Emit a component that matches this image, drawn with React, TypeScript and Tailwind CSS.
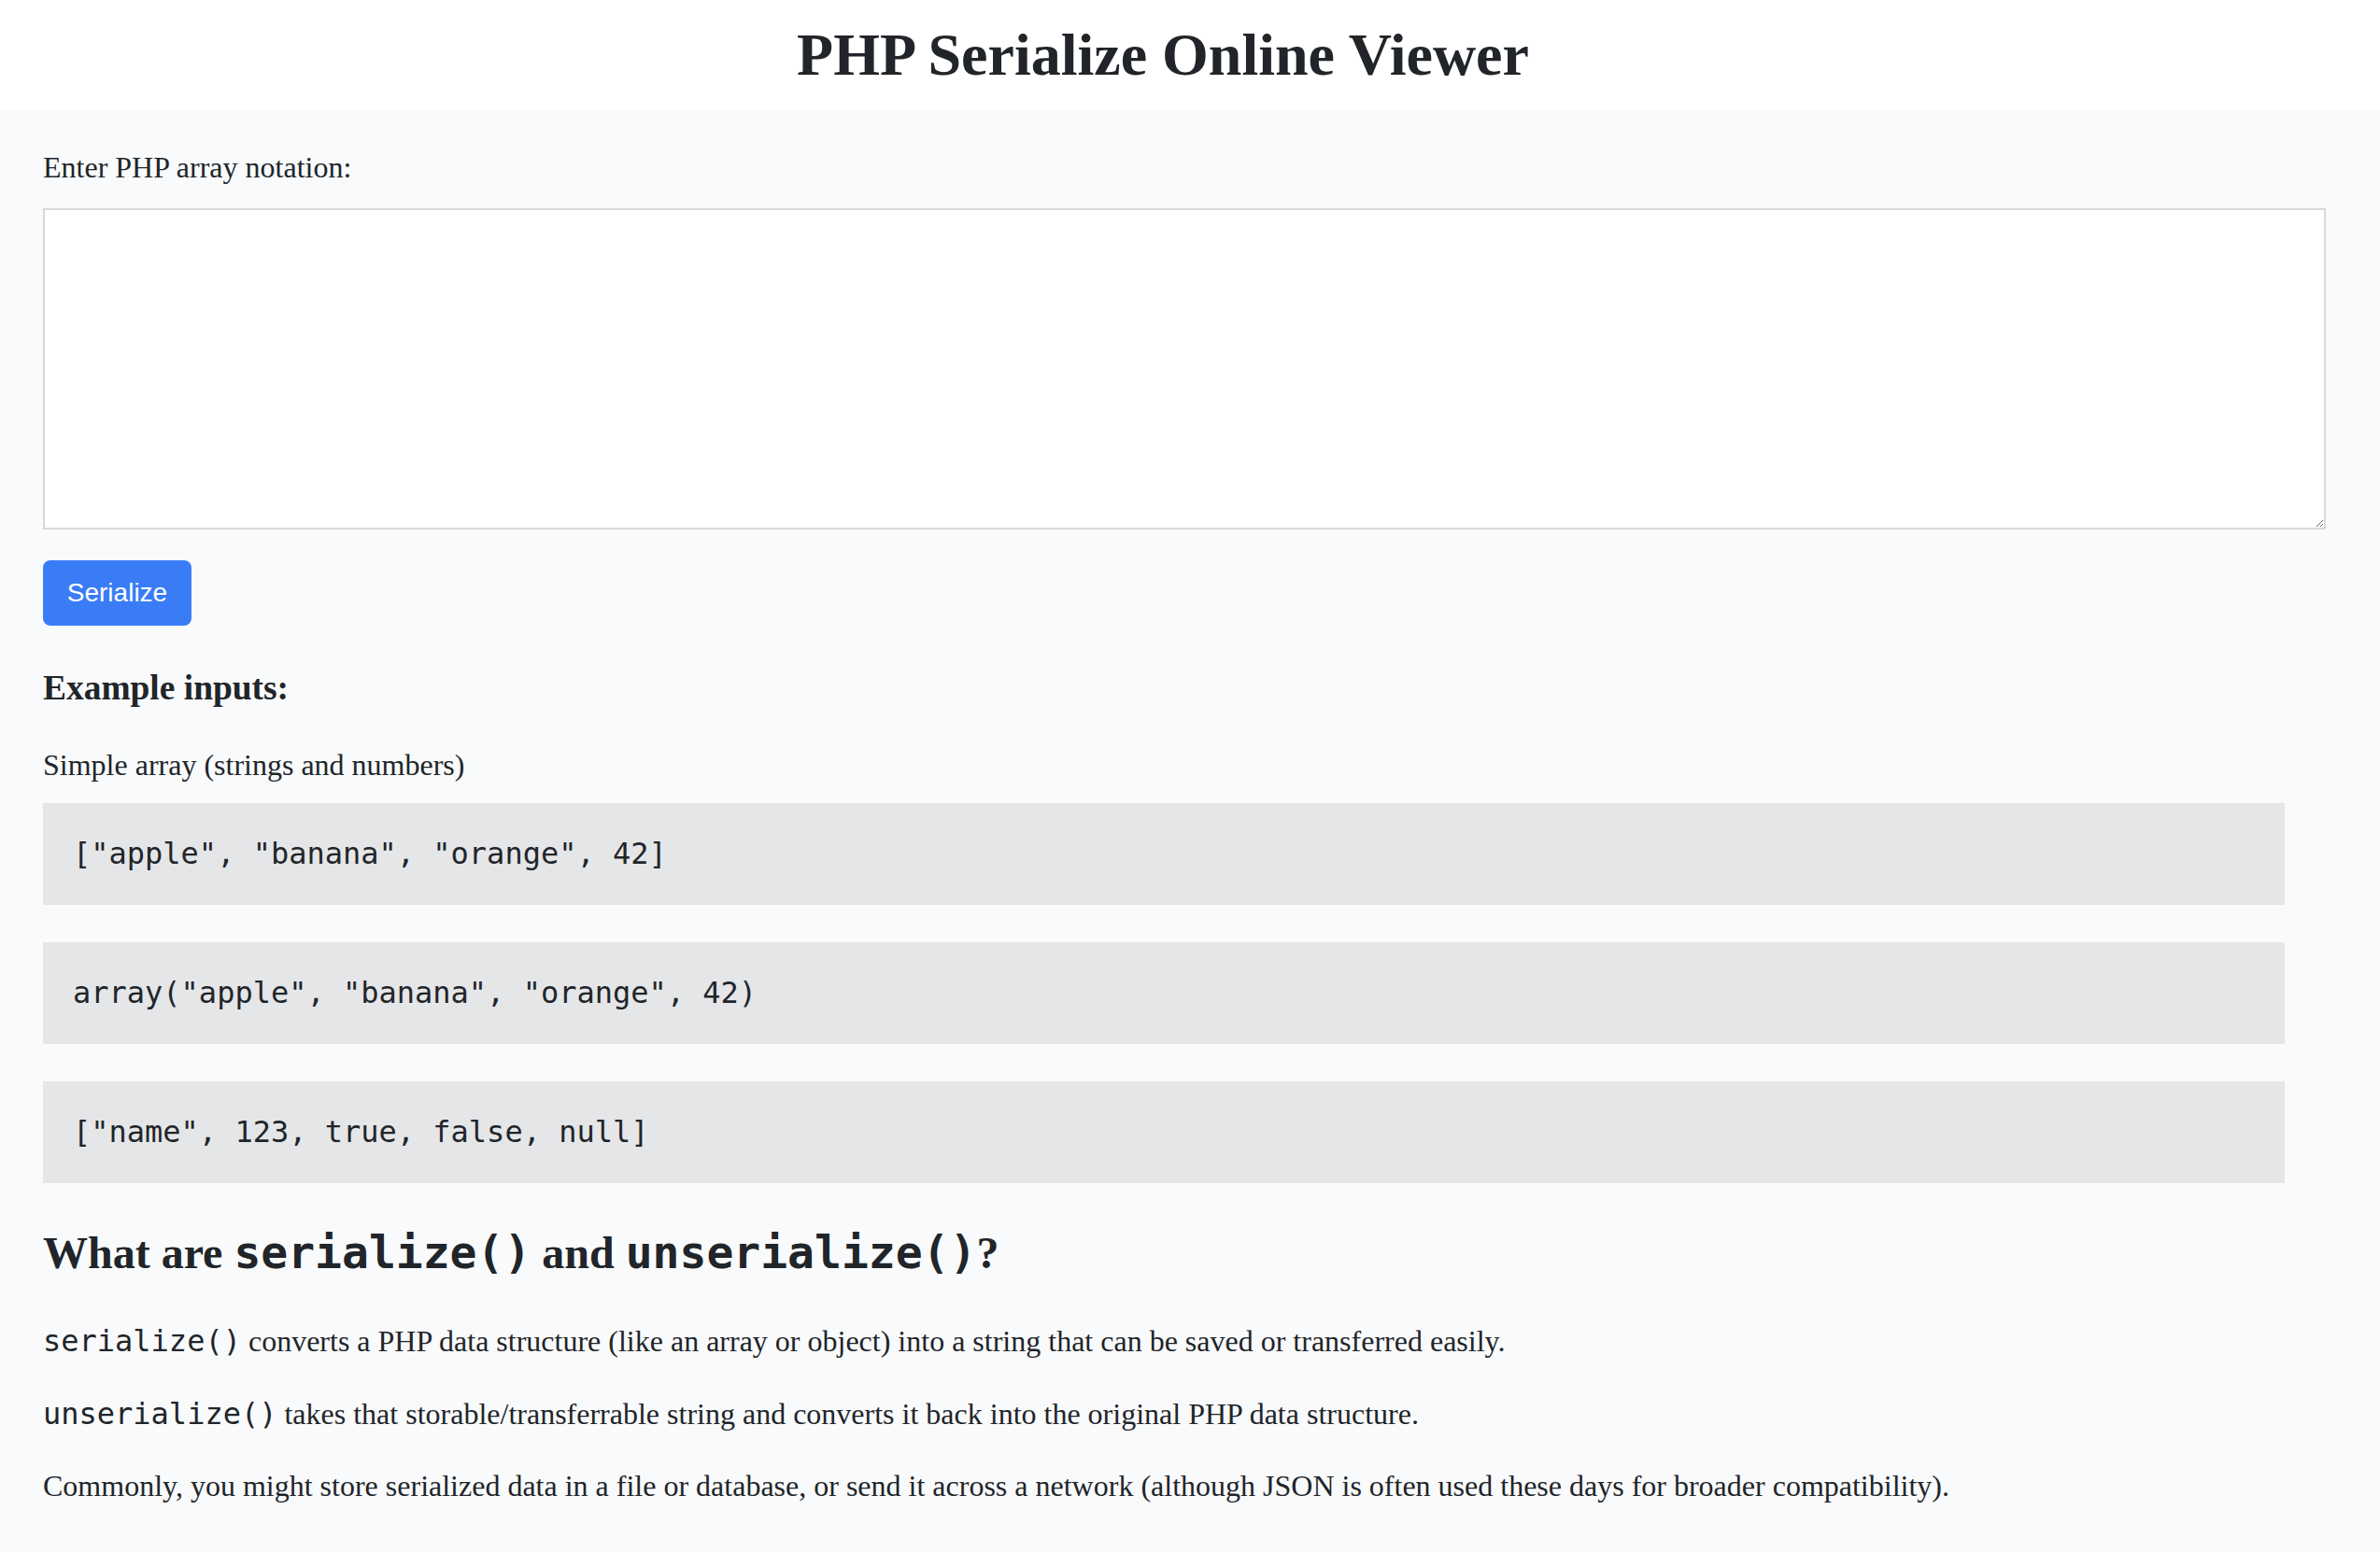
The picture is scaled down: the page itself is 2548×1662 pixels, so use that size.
import { useState } from 'react'

const examples = [
  '["apple", "banana", "orange", 42]',
  'array("apple", "banana", "orange", 42)',
  '["name", 123, true, false, null]',
]

const serif = { fontFamily: '"Liberation Serif", "Times New Roman", serif' }

export default function App() {
  const [input, setInput] = useState('')

  return (
    <div
      className="min-h-screen bg-[#f9fafb] text-[#212529] font-['Liberation_Serif','Times_New_Roman',serif]"
      style={serif}
    >
      {/* Header */}
      <header className="h-[118px] bg-white flex items-center justify-center pr-[58px]">
        <h1 className="text-[64px] leading-[74px] font-bold">PHP Serialize Online Viewer</h1>
      </header>

      <main className="ml-[46px] w-[2400px] pt-[43px] pb-[40px] flex flex-col">
        <label className="text-[32px] leading-[36px]">Enter PHP array notation:</label>
        <textarea
          value={input}
          onChange={(e) => setInput(e.target.value)}
          className="mt-[26px] w-[2444px] h-[344px] bg-white border-2 border-[#d9d9d9] p-[20px] text-[32px] outline-none"
        />

        <div className="mt-[33px]">
          <button className="w-[159px] h-[70px] rounded-[8px] bg-[#3a7cf5] text-white text-[28px] font-['Liberation_Sans',Arial,sans-serif]">
            Serialize
          </button>
        </div>

        <h3 className="mt-[46px] text-[37.44px] leading-[42px] font-bold">Example inputs:</h3>
        <p className="mt-[43px] text-[32px] leading-[36px]">Simple array (strings and numbers)</p>

        <div className="mt-[23px] flex flex-col gap-[40px]">
          {examples.map((ex) => (
            <pre
              key={ex}
              className="h-[109px] flex items-center pl-[32px] bg-[#e5e6e8] text-[32px] leading-[37px] font-['DejaVu_Sans_Mono',monospace]"
            >
              {ex}
            </pre>
          ))}
        </div>

        <h2 className="mt-[47px] text-[48px] leading-[54px] font-bold">
          What are <code className="font-['DejaVu_Sans_Mono',monospace]">serialize()</code> and{' '}
          <code className="font-['DejaVu_Sans_Mono',monospace]">unserialize()</code>?
        </h2>

        <p className="mt-[49px] text-[32px] leading-[36px]">
          <code className="font-['DejaVu_Sans_Mono',monospace]">serialize()</code> converts a PHP data structure (like an
          array or object) into a string that can be saved or transferred easily.
        </p>
        <p className="mt-[42px] text-[32px] leading-[36px]">
          <code className="font-['DejaVu_Sans_Mono',monospace]">unserialize()</code> takes that storable/transferrable
          string and converts it back into the original PHP data structure.
        </p>
        <p className="mt-[41px] text-[32px] leading-[36px]">
          Commonly, you might store serialized data in a file or database, or send it across a network (although JSON is
          often used these days for broader compatibility).
        </p>
      </main>
    </div>
  )
}
